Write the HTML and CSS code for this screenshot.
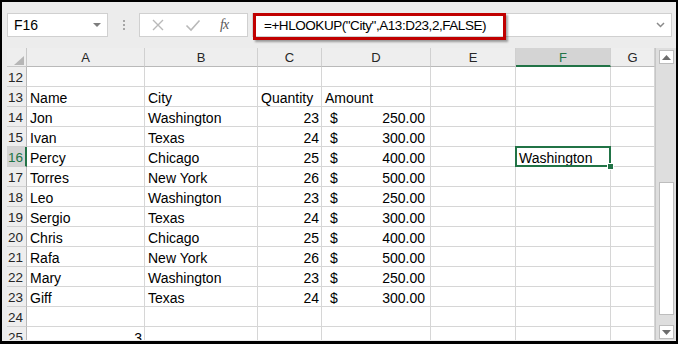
FILE: index.html
```html
<!DOCTYPE html>
<html lang="en">
<head>
    <meta charset="UTF-8">
    <title>HLOOKUP</title>
    <link rel="stylesheet" href="styles.css">
</head>
<body>
    <div class="window">
        <div class="toolbar">
            <div class="namebox">
                <span>F16</span>
                <span class="caret"></span>
            </div>
            <div class="dots"><i></i><i></i><i></i></div>
            <div class="fxbox">
                <svg width="14" height="14" viewBox="0 0 14 14"><path d="M2 2 L12 12 M12 2 L2 12" stroke="#b9b9b9" stroke-width="1.4" fill="none"/></svg>
                <svg width="16" height="14" viewBox="0 0 16 14"><path d="M1.5 7.5 L6 12 L14.5 2.5" stroke="#b9b9b9" stroke-width="1.6" fill="none"/></svg>
                <span class="fx">fx</span>
            </div>
            <div class="formula">
                <span>=+HLOOKUP("City",A13:D23,2,FALSE)</span>
                <svg width="9" height="6" viewBox="0 0 9 6"><path d="M1 1 L4.5 4.5 L8 1" stroke="#8a8a8a" stroke-width="1.5" fill="none"/></svg>
            </div>
        </div>
        <!-- red highlight around the formula -->
        <div class="mark"></div>

        <div class="sheet">
            <div class="grid">
                <div class="corner"><svg width="20" height="19" viewBox="0 0 20 19"><polygon points="17,8 17,17 7,17" fill="#b6b6b6"/></svg></div>
                <div class="colhead">A</div>
                <div class="colhead">B</div>
                <div class="colhead">C</div>
                <div class="colhead">D</div>
                <div class="colhead">E</div>
                <div class="colhead active">F</div>
                <div class="colhead">G</div>

                <div class="rowhead">12</div>
                <div class="cell"></div><div class="cell"></div><div class="cell"></div><div class="cell"></div><div class="cell"></div><div class="cell"></div><div class="cell"></div>

                <div class="rowhead">13</div>
                <div class="cell">Name</div><div class="cell">City</div><div class="cell">Quantity</div><div class="cell">Amount</div><div class="cell"></div><div class="cell"></div><div class="cell"></div>

                <div class="rowhead">14</div>
                <div class="cell">Jon</div><div class="cell">Washington</div><div class="cell num">23</div><div class="cell money"><span>$</span><span>250.00</span></div><div class="cell"></div><div class="cell"></div><div class="cell"></div>

                <div class="rowhead">15</div>
                <div class="cell">Ivan</div><div class="cell">Texas</div><div class="cell num">24</div><div class="cell money"><span>$</span><span>300.00</span></div><div class="cell"></div><div class="cell"></div><div class="cell"></div>

                <div class="rowhead active">16</div>
                <div class="cell">Percy</div><div class="cell">Chicago</div><div class="cell num">25</div><div class="cell money"><span>$</span><span>400.00</span></div><div class="cell"></div><div class="cell selected">Washington<span class="handle"></span></div><div class="cell"></div>

                <div class="rowhead">17</div>
                <div class="cell">Torres</div><div class="cell">New York</div><div class="cell num">26</div><div class="cell money"><span>$</span><span>500.00</span></div><div class="cell"></div><div class="cell"></div><div class="cell"></div>

                <div class="rowhead">18</div>
                <div class="cell">Leo</div><div class="cell">Washington</div><div class="cell num">23</div><div class="cell money"><span>$</span><span>250.00</span></div><div class="cell"></div><div class="cell"></div><div class="cell"></div>

                <div class="rowhead">19</div>
                <div class="cell">Sergio</div><div class="cell">Texas</div><div class="cell num">24</div><div class="cell money"><span>$</span><span>300.00</span></div><div class="cell"></div><div class="cell"></div><div class="cell"></div>

                <div class="rowhead">20</div>
                <div class="cell">Chris</div><div class="cell">Chicago</div><div class="cell num">25</div><div class="cell money"><span>$</span><span>400.00</span></div><div class="cell"></div><div class="cell"></div><div class="cell"></div>

                <div class="rowhead">21</div>
                <div class="cell">Rafa</div><div class="cell">New York</div><div class="cell num">26</div><div class="cell money"><span>$</span><span>500.00</span></div><div class="cell"></div><div class="cell"></div><div class="cell"></div>

                <div class="rowhead">22</div>
                <div class="cell">Mary</div><div class="cell">Washington</div><div class="cell num">23</div><div class="cell money"><span>$</span><span>250.00</span></div><div class="cell"></div><div class="cell"></div><div class="cell"></div>

                <div class="rowhead">23</div>
                <div class="cell">Giff</div><div class="cell">Texas</div><div class="cell num">24</div><div class="cell money"><span>$</span><span>300.00</span></div><div class="cell"></div><div class="cell"></div><div class="cell"></div>

                <div class="rowhead">24</div>
                <div class="cell"></div><div class="cell"></div><div class="cell"></div><div class="cell"></div><div class="cell"></div><div class="cell"></div><div class="cell"></div>

                <div class="rowhead">25</div>
                <div class="cell num">3</div><div class="cell"></div><div class="cell"></div><div class="cell"></div><div class="cell"></div><div class="cell"></div><div class="cell"></div>
            </div>
            <div class="scrollbar">
                <div class="sbtn"><svg width="9" height="5" viewBox="0 0 9 5"><polygon points="0,5 9,5 4.5,0" fill="#6d6d6d"/></svg></div>
                <div class="track"><div class="thumb"></div></div>
                <div class="sbtn"><svg width="9" height="5" viewBox="0 0 9 5"><polygon points="0,0 9,0 4.5,5" fill="#6d6d6d"/></svg></div>
            </div>
        </div>
    </div>
</body>
</html>
```

FILE: styles.css
```css
body {
    margin: 0;
    background-color: #ffffff;
    font-family: "Liberation Sans", Arial, sans-serif;
    color: #000000;
}
.window {
    position: relative;
    width: 678px;
    height: 344px;
    box-sizing: border-box;
    border: 2px solid #000000;
    border-bottom-width: 3px;
    background-color: #ececec;
    overflow: hidden;
}
.toolbar {
    display: flex;
    align-items: center;
    height: 46px;
    box-sizing: border-box;
    padding: 11px 4px 11px 5px;
}
.namebox {
    width: 101px;
    height: 24px;
    box-sizing: border-box;
    background-color: #ffffff;
    border: 1px solid #d0d0d0;
    display: flex;
    align-items: center;
    justify-content: space-between;
    padding: 0 6px 0 6px;
    font-size: 14px;
}
.caret {
    width: 0;
    height: 0;
    border-left: 4px solid transparent;
    border-right: 4px solid transparent;
    border-top: 4px solid #7d7d7d;
}
.dots {
    width: 31px;
    display: flex;
    flex-direction: column;
    align-items: center;
    gap: 2px;
}
.dots i {
    width: 2px;
    height: 2px;
    background-color: #a6a6a6;
}
.fxbox {
    width: 109px;
    height: 24px;
    box-sizing: border-box;
    background-color: #ffffff;
    border: 1px solid #d0d0d0;
    margin-right: 4px;
    display: flex;
    align-items: center;
    padding: 0 0 0 11px;
    gap: 20px;
}
.fx {
    font-family: "Liberation Serif", "DejaVu Serif", serif;
    font-style: italic;
    font-size: 14px;
    color: #595959;
    letter-spacing: -1px;
    margin-left: -1px;
}
.formula {
    flex: 1;
    height: 24px;
    box-sizing: border-box;
    background-color: #ffffff;
    border: 1px solid #d0d0d0;
    display: flex;
    align-items: center;
    justify-content: space-between;
    padding: 0 6px 0 11px;
    font-size: 13.5px;
    letter-spacing: -0.45px;
}
.mark {
    position: absolute;
    left: 251px;
    top: 11px;
    width: 253px;
    height: 27px;
    box-sizing: border-box;
    border: 3px solid #c00000;
    box-shadow: 2px 2px 2px rgba(0, 0, 0, 0.35);
}
.sheet {
    display: flex;
    height: 292px;
    padding-left: 5px;
    overflow: hidden;
}
.grid {
    display: grid;
    grid-template-columns: 20px 118px 113px 64px 109px 85px 95px 44px;
    grid-template-rows: 19px;
    grid-auto-rows: 20px;
    background-color: #ffffff;
    align-content: start;
}
.corner, .colhead, .rowhead {
    background-color: #eeeeee;
    box-sizing: border-box;
    color: #262626;
}
.corner {
    border-right: 1px solid #c8c8c8;
    border-bottom: 1px solid #c8c8c8;
}
.corner svg {
    display: block;
}
.colhead {
    border-right: 1px solid #d0d0d0;
    border-bottom: 1px solid #b9b9b9;
    font-size: 13px;
    display: flex;
    align-items: center;
    justify-content: center;
    padding-top: 1px;
}
.colhead.active {
    background-color: #d4d4d4;
    color: #217346;
    border-bottom: 2px solid #217346;
}
.rowhead {
    border-right: 1px solid #b9b9b9;
    border-bottom: 1px solid #d0d0d0;
    font-size: 13.5px;
    display: flex;
    align-items: flex-end;
    padding: 0 0 1px 1px;
}
.rowhead.active {
    background-color: #d4d4d4;
    color: #217346;
    border-right: 2px solid #217346;
}
.cell {
    box-sizing: border-box;
    border-right: 1px solid #d6d6d6;
    border-bottom: 1px solid #d6d6d6;
    font-size: 14px;
    line-height: 16px;
    display: flex;
    align-items: flex-end;
    padding: 0 2px 0 3px;
    white-space: nowrap;
}
.cell.num {
    justify-content: flex-end;
}
.cell.money {
    justify-content: space-between;
    padding: 0 5px 0 8px;
}
.cell.selected {
    position: relative;
}
.cell.selected::before {
    content: "";
    position: absolute;
    left: -1px;
    top: -1px;
    right: -1px;
    bottom: -1px;
    border: 2px solid #217346;
}
.handle {
    position: absolute;
    right: -4px;
    bottom: -4px;
    width: 5px;
    height: 5px;
    background-color: #217346;
    border: 1px solid #ffffff;
}
.scrollbar {
    width: 21px;
    box-sizing: border-box;
    background-color: #dedede;
    border-left: 1px solid #c6c6c6;
    display: flex;
    flex-direction: column;
    padding: 2px 2px 1px 3px;
}
.sbtn {
    height: 14px;
    box-sizing: border-box;
    background-color: #ffffff;
    border: 1px solid #bdbdbd;
    display: flex;
    align-items: center;
    justify-content: center;
}
.track {
    flex: 1;
}
.thumb {
    margin-top: 118px;
    height: 133px;
    box-sizing: border-box;
    background-color: #ffffff;
    border: 1px solid #bdbdbd;
}
```
